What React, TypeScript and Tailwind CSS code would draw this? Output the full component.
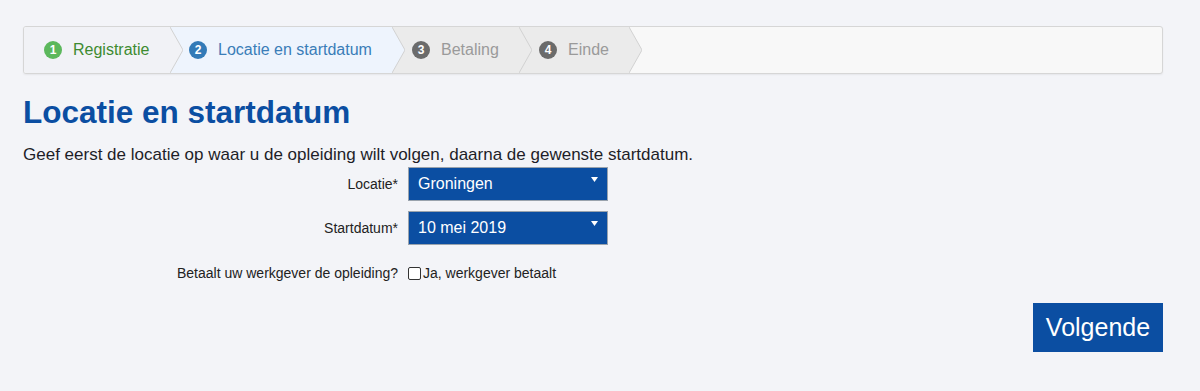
import React from "react";

type Step = { n: number; label: string; w: string; bg: string; badge: string; text: string; pl: string };

const steps: Step[] = [
  { n: 1, label: "Registratie", w: "w-[146px]", bg: "#f1f2f6", badge: "bg-[#5cb85c]", text: "text-[#3d8b30]", pl: "pl-[20px]" },
  { n: 2, label: "Locatie en startdatum", w: "w-[222px]", bg: "#eef4fd", badge: "bg-[#337ab7]", text: "text-[#3a7db8]", pl: "pl-[19px]" },
  { n: 3, label: "Betaling", w: "w-[127px]", bg: "#ebebeb", badge: "bg-[#6b6b6b]", text: "text-[#9a9a9a]", pl: "pl-[20px]" },
  { n: 4, label: "Einde", w: "w-[110px]", bg: "#ebebeb", badge: "bg-[#6b6b6b]", text: "text-[#9a9a9a]", pl: "pl-[20px]" },
];

const bgClass: Record<number, string> = {
  1: "bg-[#f1f2f6]",
  2: "bg-[#eef4fd]",
  3: "bg-[#ebebeb]",
  4: "bg-[#ebebeb]",
};

function Caret() {
  return (
    <svg className="absolute right-[9px] top-[9px]" width="7" height="5" viewBox="0 0 7 5">
      <polygon points="0,0 7,0 3.5,5" fill="#ffffff" />
    </svg>
  );
}

function Select({ value }: { value: string }) {
  return (
    <div className="relative ml-[10px] flex h-[34px] w-[200px] items-center border border-[#9aa3ad] bg-[#0b4ea2] pl-[9px] text-[16px] text-white">
      {value}
      <Caret />
    </div>
  );
}

export default function App() {
  return (
    <div
      className="min-h-[391px] w-full bg-[#f3f4f8] pl-[23px] pr-[37px] pt-[26px] text-[#222]"
      style={{ fontFamily: '"Liberation Sans", Arial, sans-serif' }}
    >
      <div className="flex h-[48px] overflow-hidden rounded-[3px] border border-[#d6d6d6] bg-[#f8f8f8] shadow-[0_1px_2px_rgba(0,0,0,0.06)]">
        {steps.map((s, i) => (
          <div
            key={s.n}
            className={`relative flex h-full shrink-0 items-center ${s.w} ${s.pl} ${bgClass[s.n]}`}
            style={{ zIndex: 10 - i }}
          >
            <span
              className={`mr-[11px] flex h-[18px] w-[18px] items-center justify-center rounded-full text-[12px] font-bold text-white ${s.badge}`}
            >
              {s.n}
            </span>
            <span className={`text-[16px] ${s.text}`}>{s.label}</span>
            <svg
              className="absolute right-[-13px] top-0"
              width="13"
              height="46"
              viewBox="0 0 13 46"
            >
              <polygon points="0,0 13,23 0,46" fill={s.bg} />
              <polyline points="0,0 13,23 0,46" fill="none" stroke="#d2d2d2" strokeWidth="1" />
            </svg>
          </div>
        ))}
      </div>

      <h1 className="mt-[21px] text-[31.5px] font-bold leading-[35px] text-[#0b4ea2]">Locatie en startdatum</h1>
      <p className="mt-[14px] text-[17px] leading-[22px] text-[#1e1e28]">
        Geef eerst de locatie op waar u de opleiding wilt volgen, daarna de gewenste startdatum.
      </p>

      <div className="mt-[1px] flex flex-col">
        <div className="flex items-center">
          <label className="w-[375px] text-right text-[14px] text-[#222]">Locatie*</label>
          <Select value="Groningen" />
        </div>
        <div className="mt-[10px] flex items-center">
          <label className="w-[375px] text-right text-[14px] text-[#222]">Startdatum*</label>
          <Select value="10 mei 2019" />
        </div>
        <div className="mt-[18px] flex h-[20px] items-center">
          <label className="w-[375px] text-right text-[14px] text-[#222]">Betaalt uw werkgever de opleiding?</label>
          <span className="ml-[10px] h-[13px] w-[13px] rounded-[2px] border border-[#333] bg-white" />
          <span className="ml-[2px] text-[14px] text-[#222]">Ja, werkgever betaalt</span>
        </div>
      </div>

      <div className="mt-[20px] flex justify-end">
        <button className="h-[49px] w-[130px] bg-[#0b4ea2] text-[25px] text-white">Volgende</button>
      </div>
    </div>
  );
}
